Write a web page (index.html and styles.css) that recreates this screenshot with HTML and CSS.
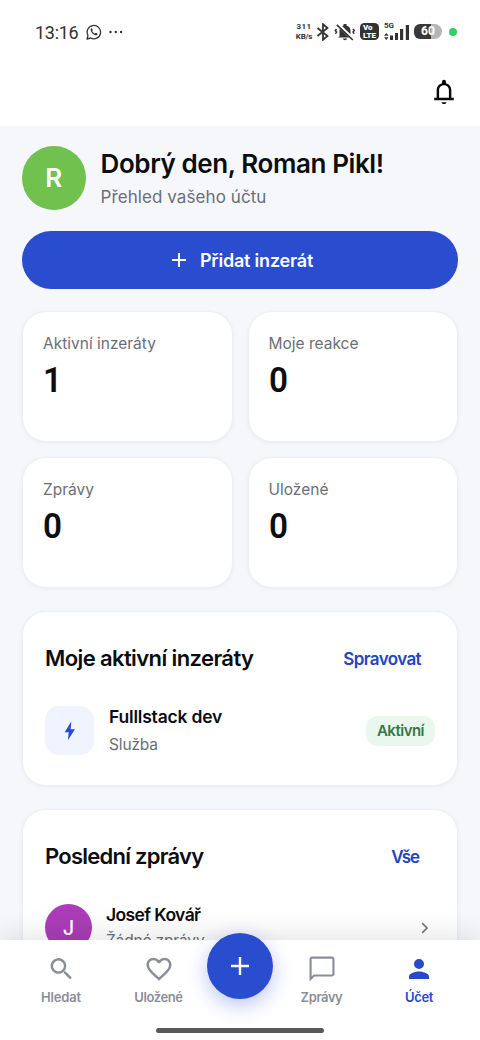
FILE: index.html
```
<!DOCTYPE html>
<html lang="cs">
<head>
<meta charset="utf-8">
<title>Účet</title>
<link rel="stylesheet" href="styles.css">
</head>
<body>
<div class="app">
  <header class="top">
    <div class="status">
      <span class="clock">13:16</span>
      <svg class="wa" width="16" height="16" viewBox="0 0 16 16"><path d="M1 15l1-3.600A6.700 6.700 0 1 1 4.600 14z" fill="none" stroke="#333" stroke-width="1.300" stroke-linejoin="round"/><path d="M4.700 4.900c.4-.7 1.100-.8 1.500-.2l.6 1.300-.6 1c.5 1.200 1.500 2.100 2.700 2.600l.9-.8 1.500.7c.4.3.2 1.100-.3 1.500-1.700 1.200-6.800-2.300-6.300-6.100z" fill="#333"/></svg>
      <svg class="dots" width="14" height="4" viewBox="0 0 14 4" fill="#333"><circle cx="1.500" cy="2" r="1.200"/><circle cx="6.800" cy="2" r="1.200"/><circle cx="12.100" cy="2" r="1.200"/></svg>
      <span class="rate"><span class="num">311</span><span>KB/s</span></span>
      <svg class="bt" width="14" height="18" viewBox="0 0 14 18"><path d="M1.500 5l10 8-4.500 3.800V1.200L11.500 5l-10 8" fill="none" stroke="#333" stroke-width="1.800"/></svg>
      <svg class="mute" width="22" height="18" viewBox="0 0 22 18"><path d="M5.500 13.500V8c0-3 1.800-4.900 4-5.400V1h3v1.600c2.200.5 4 2.400 4 5.400v4l1.500 2.500H4zM9 15.500h4c0 2.200-4 2.200-4 0z" fill="#333"/><path d="M3.500 1l16 15.500" stroke="#fff" stroke-width="3.400"/><path d="M2.800 1.800l16 15.200" stroke="#333" stroke-width="1.700"/><path d="M2.500 6L1.300 7.600l1.300 1.500-1.300 1.600M19 6l1.300 1.600L19 9.100l1.300 1.600" fill="none" stroke="#333" stroke-width="1.500"/></svg>
      <span class="volte"><span class="vo">Vo</span><span>LTE</span></span>
      <span class="signal">
        <span class="gen">5G</span>
        <svg width="26" height="17" viewBox="0 0 26 17" fill="#333"><path d="M0 12.800L2.300 10l2.300 2.800zM0 14.200L2.300 17l2.300-2.800zM6 12.500h3V17H6zM11 10h3v7h-3zM16 6h3.200v11H16zM21.800 2H25v15h-3.200z"/></svg>
      </span>
      <span class="battery">60</span>
      <span class="live"></span>
    </div>
    <div class="actions">
      <svg width="28" height="28" viewBox="0 0 24 24" fill="#090a0d"><path d="M12 22.300c1.300 0 2.100-.7 2.100-1.600H9.900c0 .9.800 1.600 2.100 1.600zM18.300 17v-6.400c0-3.200-1.700-5.500-4.600-6.200V3.300a1.700 1.700 0 0 0-3.400 0v1.100C7.400 5.100 5.700 7.500 5.700 10.600V17H3.600v2.100h16.800V17zM16.200 17H7.800v-6.400C7.800 8 9.400 6.200 12 6.200s4.200 1.800 4.200 4.400z"/></svg>
    </div>
  </header>

  <main class="content">
    <section class="hello">
      <span class="avatar">R</span>
      <div>
        <h1>Dobrý den, Roman Pikl!</h1>
        <p>Přehled vašeho účtu</p>
      </div>
    </section>

    <a class="add"><svg width="14" height="14" viewBox="0 0 14 14"><path d="M7 0v14M0 7h14" stroke="#fff" stroke-width="1.900"/></svg><span>Přidat inzerát</span></a>

    <section class="stats">
      <div class="card stat"><span class="label">Aktivní inzeráty</span><strong>1</strong></div>
      <div class="card stat"><span class="label">Moje reakce</span><strong>0</strong></div>
      <div class="card stat"><span class="label">Zprávy</span><strong>0</strong></div>
      <div class="card stat"><span class="label">Uložené</span><strong>0</strong></div>
    </section>

    <section class="card panel">
      <div class="head"><h2>Moje aktivní inzeráty</h2><a class="manage">Spravovat</a></div>
      <div class="row">
        <span class="tile"><svg width="12" height="20" viewBox="0 0 12 20"><path d="M7.300.5L.7 11.300h4L3.900 19.300 11 8.300H6.700z" fill="#2a4ccf"/></svg></span>
        <div class="info"><b>Fulllstack dev</b><span class="label">Služba</span></div>
        <span class="badge">Aktivní</span>
      </div>
    </section>

    <section class="card panel messages">
      <div class="head"><h2 class="tight">Poslední zprávy</h2><a class="all">Vše</a></div>
      <div class="row person">
        <span class="avatar small">J</span>
        <div class="info"><b class="name">Josef Kovář</b><span class="label">Žádné zprávy</span></div>
        <svg class="chev" width="8" height="12" viewBox="0 0 8 12"><path d="M1.200 1.200L6 6l-4.800 4.800" fill="none" stroke="#777980" stroke-width="1.700"/></svg>
      </div>
    </section>
  </main>

  <nav class="nav">
    <a class="item hledat"><svg width="29" height="29" viewBox="0 0 24 24"><path d="M15.500 14h-.8l-.3-.3A6.500 6.500 0 1 0 13.700 14.400l.3.300v.8l5 5 1.500-1.500zm-6 0a4.500 4.500 0 1 1 0-9 4.500 4.500 0 0 1 0 9z"/></svg><span>Hledat</span></a>
    <a class="item ulozene"><svg width="30" height="30" viewBox="0 0 24 24"><path d="M16.500 3c-1.740 0-3.410.81-4.500 2.090C10.910 3.810 9.240 3 7.500 3 4.420 3 2 5.420 2 8.500c0 3.780 3.400 6.860 8.550 11.540L12 21.350l1.450-1.320C18.600 15.360 22 12.280 22 8.500 22 5.420 19.580 3 16.500 3zm-4.400 15.550l-.1.100-.1-.100C7.140 14.240 4 11.390 4 8.500 4 6.500 5.500 5 7.500 5c1.540 0 3.040.99 3.570 2.360h1.870C13.460 5.990 14.960 5 16.500 5c2 0 3.500 1.500 3.500 3.500 0 2.890-3.140 5.740-7.900 10.050z"/></svg><span>Uložené</span></a>
    <a class="fab"><svg width="20" height="20" viewBox="0 0 20 20"><path d="M10 1v18M1 10h18" stroke="#fff" stroke-width="2.400"/></svg></a>
    <a class="item zpravy"><svg width="30" height="30" viewBox="0 0 24 24"><path d="M20 2H4c-1.100 0-2 .9-2 2v18l4-4h14c1.100 0 2-.9 2-2V4c0-1.100-.9-2-2-2zm.3 14.300H5.300L3.700 17.900V3.700h16.600z"/></svg><span>Zprávy</span></a>
    <a class="item ucet"><svg width="30" height="30" viewBox="0 0 24 24"><path d="M12 12a4 4 0 1 0 0-8 4 4 0 0 0 0 8zm0 2c-2.670 0-8 1.340-8 4v2h16v-2c0-2.660-5.330-4-8-4z"/></svg><span>Účet</span></a>
    <span class="handle"></span>
  </nav>
</div>
</body>
</html>
```
FILE: styles.css
```
* { box-sizing: border-box; }
body { margin: 0; font-family: Inter, "Noto Sans", sans-serif; color: #0c0d11; background: #f5f7fb; }
h1, h2, p { margin: 0; font-weight: 600; }
svg { display: block; flex: none; }
.app { height: 1040px; display: flex; flex-direction: column; overflow: hidden; }

.top { flex: none; height: 126px; background: #fff; }
.status { height: 63px; padding: 0 23px 0 35px; display: flex; align-items: center; color: #333; font-family: Roboto, sans-serif; }
.clock { width: 43px; font-size: 18px; letter-spacing: -.3px; padding-top: 2px; white-space: nowrap; }
.wa { margin-left: 8px; }
.dots { margin-left: 7px; }
.rate { margin-left: auto; width: 18px; display: flex; flex-direction: column; align-items: center; font-size: 8px; line-height: 10px; font-weight: 700; letter-spacing: -.2px; }
.num { letter-spacing: .4px; }
.bt { margin-left: 3px; }
.mute { margin-left: 4px; }
.volte { margin-left: 4px; width: 19px; height: 17px; border-radius: 4.500px; background: #333; color: #fff; font-size: 8px; font-weight: 900; line-height: 8px; display: flex; flex-direction: column; justify-content: center; align-items: center; }
.vo { align-self: flex-start; padding-left: 3px; }
.signal { margin-left: 5px; position: relative; }
.gen { position: absolute; left: 0; top: -1px; font-size: 8px; line-height: 8px; font-weight: 700; }
.battery { margin-left: 4px; width: 28px; height: 15px; border-radius: 6px 7.500px 7.500px 6px; background: linear-gradient(90deg, #383838 62%, #b5b5b5 62%); color: #fff; font-size: 12px; line-height: 15px; font-weight: 800; text-align: center; }
.live { width: 8px; height: 8px; margin-left: 7px; border-radius: 50%; background: #2fd160; }
.actions { display: flex; justify-content: flex-end; padding: 15px 22px 0 0; }

.content { flex: none; height: 814px; overflow: hidden; padding: 20px 22px 0; display: flex; flex-direction: column; }
.hello { flex: none; display: flex; gap: 15px; height: 64px; }
.avatar { flex: none; width: 63.500px; height: 63.500px; border-radius: 50%; background: #70c14d; color: #fff; display: flex; align-items: center; justify-content: center; font-size: 26px; font-weight: 600; }
.hello > div { padding-top: 1px; white-space: nowrap; }
h1 { font-size: 26px; line-height: 34px; letter-spacing: -.4px; }
.hello p { font-size: 17px; line-height: 24px; font-weight: 400; color: #6b6e77; letter-spacing: .08px; margin-top: 4px; }
.add { flex: none; height: 58px; margin-top: 21px; border-radius: 29px; background: #2a4ccf; color: #fff; display: flex; align-items: center; justify-content: center; gap: 14px; font-size: 18px; line-height: 24px; font-weight: 600; letter-spacing: -.2px; padding-left: 5px; }
.add span { padding-top: 2px; }

.card { background: #fff; border: 1px solid #edf0f3; box-shadow: 0 1px 4px rgba(30, 45, 70, .055); border-radius: 24px; }
.stats { flex: none; margin-top: 22px; display: grid; grid-template-columns: 1fr 1fr; grid-auto-rows: 131px; gap: 15px; }
.stat { padding: 21px 20px 0; display: flex; flex-direction: column; }
.label { font-size: 15.500px; line-height: 22px; color: #6b6e77; letter-spacing: 0; }
.stat strong { font-family: Roboto, sans-serif; font-size: 35px; line-height: 42px; font-weight: 600; margin-top: 5px; transform: scaleX(.95); transform-origin: left; }
.panel { flex: none; margin-top: 23px; height: 175px; padding: 0 22px; border-radius: 24px; }
.head { height: 94px; padding-bottom: 2px; display: flex; align-items: center; justify-content: space-between; }
h2 { font-size: 22px; letter-spacing: -.6px; }
h2.tight { letter-spacing: -.75px; }
.head a { color: #2545c0; font-size: 17px; font-weight: 600; letter-spacing: -.6px; padding-right: 14px; padding-top: 1px; }
.head .all { letter-spacing: -1.100px; padding-right: 16px; }
.row { display: flex; align-items: center; height: 49px; }
.tile { flex: none; width: 49px; height: 49px; border-radius: 14px; background: #f0f4ff; display: flex; align-items: center; justify-content: center; }
.info { flex: 1; margin-left: 15px; display: flex; flex-direction: column; gap: 5px; white-space: nowrap; }
.info b { font-size: 17.500px; line-height: 24px; font-weight: 600; letter-spacing: -.2px; }
.info .name { letter-spacing: -.6px; }
.info .label { letter-spacing: -.15px; }
.badge { flex: none; width: 69px; height: 30px; border-radius: 12px; background: #eaf7ec; color: #35764a; font-size: 15px; font-weight: 600; line-height: 30px; letter-spacing: -.5px; text-align: center; }
.messages { height: 220px; }
.messages .row { height: 47px; }
.small { width: 47px; height: 47px; background: #ab3db8; font-size: 20px; font-weight: 500; }
.messages .info { margin-left: 14px; gap: 3px; }
.person .chev { margin-right: 6px; }

.nav { flex: none; position: relative; height: 100px; background: #fff; box-shadow: 0 -3px 28px rgba(0, 0, 0, .12); display: grid; grid-template-columns: 122px 73px 90px 73px 122px; }
.item { display: flex; flex-direction: column; align-items: center; color: #8a8e99; font-size: 13px; line-height: 16px; font-weight: 600; padding-top: 14px; letter-spacing: -.4px; }
.item svg { fill: currentColor; height: 30px; margin-bottom: 5px; }
.hledat { letter-spacing: -.15px; }
.ucet { color: #2849c9; }
.fab { width: 66px; height: 66px; margin: -7.500px auto 0; border-radius: 50%; background: #2a4ccf; box-shadow: 0 6px 20px rgba(42, 76, 207, .32); display: flex; align-items: center; justify-content: center; }
.handle { position: absolute; left: 156px; bottom: 7.500px; width: 168px; height: 5px; border-radius: 3px; background: #595959; }
```
